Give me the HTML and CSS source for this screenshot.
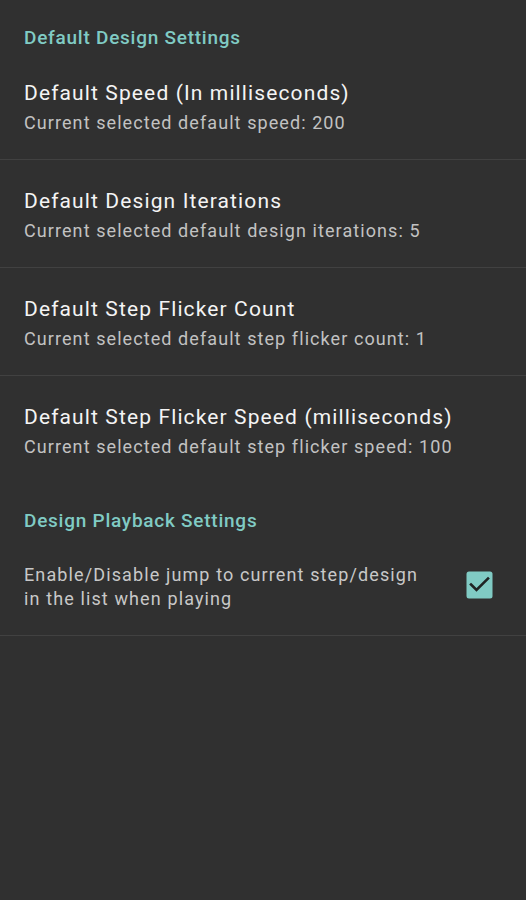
FILE: index.html
```html
<!DOCTYPE html>
<html lang="en">
<head>
<meta charset="utf-8">
<title>Settings</title>
<link rel="stylesheet" href="styles.css">
</head>
<body>
<main class="settings">
  <h2 class="category">Default Design Settings</h2>
  <div class="pref">
    <div class="pref-title">Default Speed (In milliseconds)</div>
    <div class="pref-summary">Current selected default speed: 200</div>
  </div>
  <div class="pref">
    <div class="pref-title">Default Design Iterations</div>
    <div class="pref-summary">Current selected default design iterations: 5</div>
  </div>
  <div class="pref">
    <div class="pref-title">Default Step Flicker Count</div>
    <div class="pref-summary">Current selected default step flicker count: 1</div>
  </div>
  <div class="pref pref-last">
    <div class="pref-title">Default Step Flicker Speed (milliseconds)</div>
    <div class="pref-summary">Current selected default step flicker speed: 100</div>
  </div>
  <h2 class="category">Design Playback Settings</h2>
  <div class="pref pref-check">
    <div class="pref-text">Enable/Disable jump to current step/design in the list when playing</div>
    <div class="checkbox">
      <svg width="27" height="28" viewBox="0 0 27 28" aria-hidden="true">
        <rect x="0.5" y="0.5" width="26" height="27" rx="2.5" fill="#80cbc4"/>
        <path d="M5 13.5 L10.5 19 L22 7.5" fill="none" stroke="#1f2424" stroke-width="2.6" stroke-linecap="square"/>
      </svg>
    </div>
  </div>
</main>
</body>
</html>
```
FILE: styles.css
```css
html, body {
  margin: 0;
  padding: 0;
  background: #303030;
}
body {
  width: 526px;
  height: 900px;
  overflow: hidden;
  font-family: Roboto, "Noto Sans", sans-serif;
}
.settings {
  display: flex;
  flex-direction: column;
}
.category {
  margin: 0;
  padding: 26px 24px 2px;
  font-size: 19px;
  line-height: 24px;
  font-weight: 500;
  letter-spacing: 0.75px;
  color: #80cbc4;
}
.pref {
  padding: 25px 24px 22px;
  border-bottom: 1px solid #414141;
  display: flex;
  flex-direction: column;
}
.pref-last {
  border-bottom: none;
}
.pref-title {
  font-size: 21px;
  line-height: 32px;
  letter-spacing: 1.12px;
  color: #f4f4f4;
}
.pref-summary {
  font-size: 18px;
  line-height: 28px;
  letter-spacing: 1.08px;
  color: #c2c2c2;
}
.pref-check {
  flex-direction: row;
  align-items: center;
  padding: 28px 33px 24px 24px;
}
.pref-text {
  flex: 1;
  max-width: 405px;
  font-size: 18px;
  line-height: 24px;
  letter-spacing: 1.12px;
  color: #c8c8c8;
}
.checkbox {
  margin-left: auto;
  display: flex;
  margin-top: -4px;
}
```
